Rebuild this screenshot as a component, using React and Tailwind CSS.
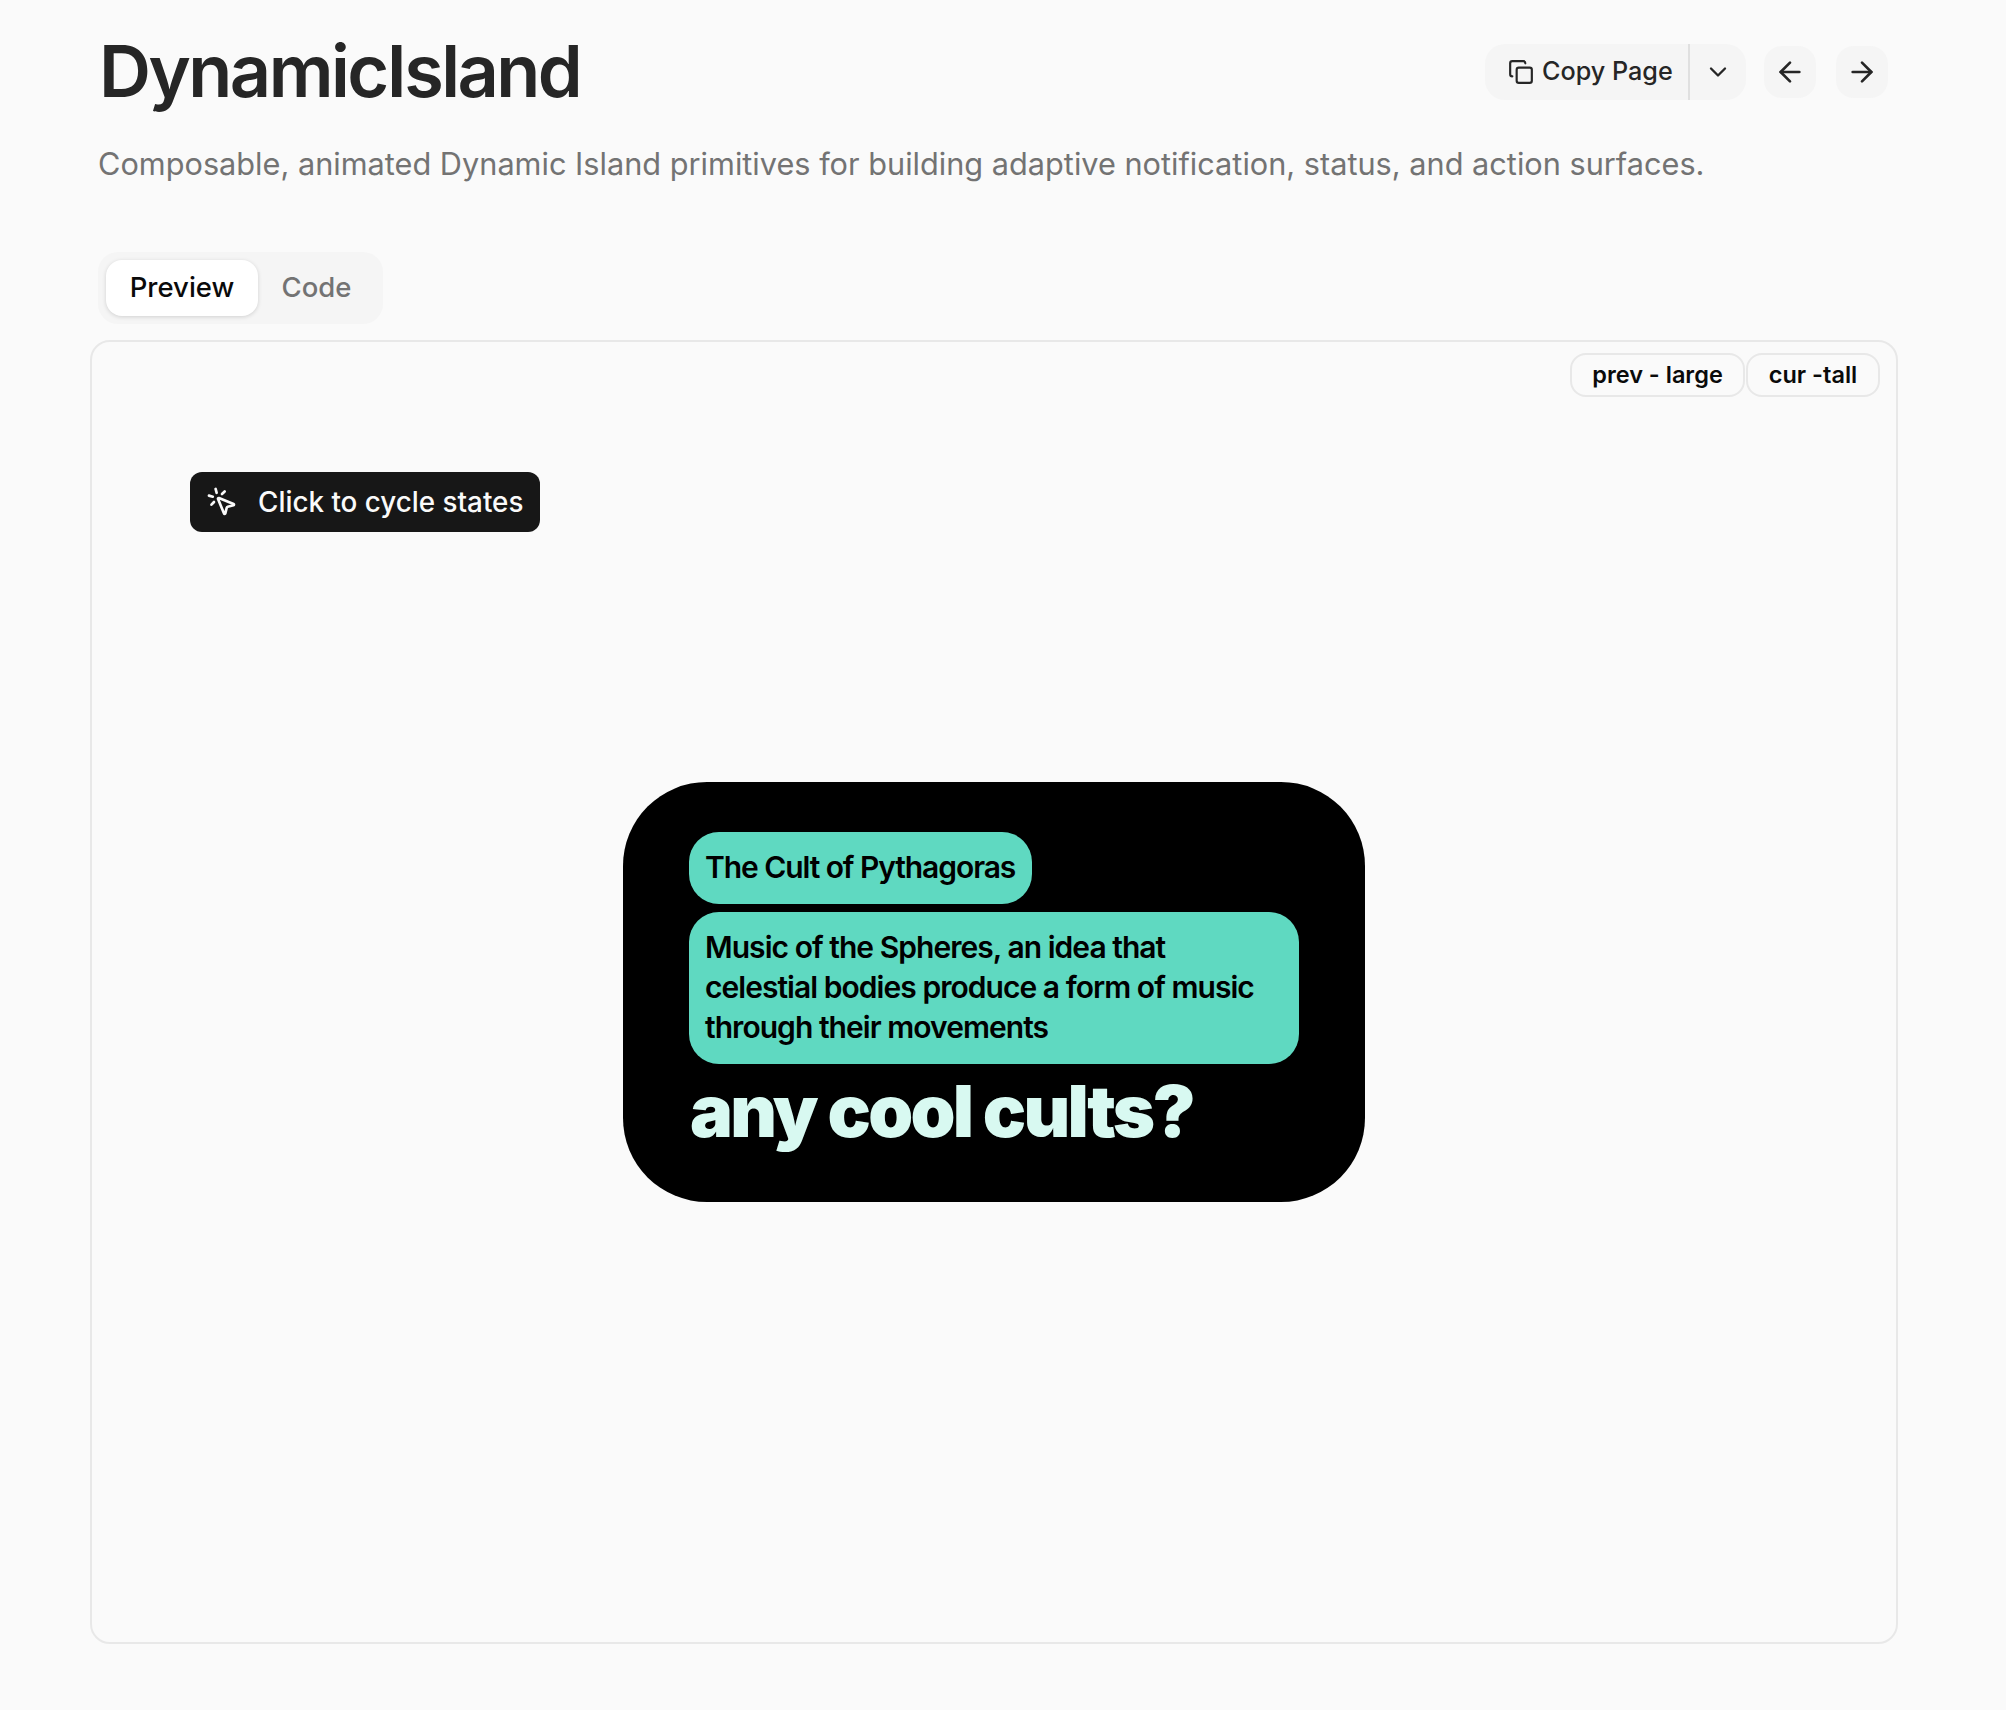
import React from "react";
import { Copy, ChevronDown, ArrowLeft, ArrowRight, MousePointerClick } from "lucide-react";

export default function App() {
  return (
    <div className="min-h-[1710px] w-[2006px] bg-[#fafafa] pt-[36px] pl-[90px] pr-[108px] font-['Inter',sans-serif] text-[#262626]">
      <div className="flex items-start justify-between pl-[9px] pr-[10px]">
        <h1 className="h-[72px] text-[72px] font-semibold leading-[70px] tracking-[-0.035em]">DynamicIsland</h1>
        <div className="flex items-center pt-[8px]">
          <div className="flex h-[56px] w-[261px] items-center rounded-[20px] bg-[#f5f5f5]">
            <button className="flex h-full w-[203px] items-center gap-[8px] pl-[23px] text-[25.2px] font-medium">
              <Copy size={26} strokeWidth={2} />
              <span>Copy Page</span>
            </button>
            <div className="h-full w-[2px] bg-[#e0e0e0]" />
            <button className="flex h-full flex-1 items-center justify-center">
              <ChevronDown size={28} strokeWidth={2} />
            </button>
          </div>
          <button className="ml-[18px] flex h-[52px] w-[52px] items-center justify-center rounded-[18px] bg-[#f5f5f5]">
            <ArrowLeft size={32} strokeWidth={2} />
          </button>
          <button className="ml-[20px] flex h-[52px] w-[52px] items-center justify-center rounded-[18px] bg-[#f5f5f5]">
            <ArrowRight size={32} strokeWidth={2} />
          </button>
        </div>
      </div>

      <p className="mt-[34px] pl-[8px] text-[30.7px] font-normal leading-[44px] text-[#737373]">
        Composable, animated Dynamic Island primitives for building adaptive notification, status, and action surfaces.
      </p>

      <div className="mt-[66px] ml-[8px] flex h-[72px] w-[285px] items-center rounded-[20px] bg-[#f5f5f5] pl-[8px]">
        <button className="flex h-[56px] w-[152px] items-center justify-center rounded-[16px] bg-white text-[27.5px] font-medium text-[#0a0a0a] shadow-[0_1px_4px_rgba(0,0,0,0.15)]">
          Preview
        </button>
        <button className="flex h-[56px] w-[117px] items-center justify-center text-[27.5px] font-medium text-[#737373]">
          Code
        </button>
      </div>

      <div className="relative mt-[16px] flex h-[1304px] w-[1808px] items-center justify-center rounded-[20px] border-2 border-[#e8e8e8]">
        <div className="absolute right-[16px] top-[11px] flex gap-[1px]">
          <span className="flex h-[44px] w-[175px] items-center justify-center rounded-[16px] border-2 border-[#e8e8e8] text-[23.5px] font-semibold text-[#0a0a0a]">prev - large</span>
          <span className="flex h-[44px] w-[134px] items-center justify-center rounded-[16px] border-2 border-[#e8e8e8] text-[23.5px] font-semibold text-[#0a0a0a]">cur -tall</span>
        </div>

        <button className="absolute left-[98px] top-[130px] flex h-[60px] w-[350px] items-center gap-[20px] rounded-[12px] bg-[#171717] pl-[16px] text-[27.8px] font-medium text-[#fafafa]">
          <MousePointerClick size={32} strokeWidth={2} />
          <span className="pt-[2px]">Click to cycle states</span>
        </button>

        <div className="flex h-[420px] w-[742px] flex-col items-start rounded-[84px] bg-black pl-[66px] pt-[50px] pr-[66px]">
          <div className="flex h-[72px] w-[343px] items-center rounded-[30px] bg-[#5fd9c1] pb-[2px] pl-[16px] text-[30px] font-semibold leading-[40px] tracking-[-0.036em] text-black">
            The Cult of Pythagoras
          </div>
          <div className="mt-[8px] h-[152px] w-[610px] rounded-[30px] bg-[#5fd9c1] px-[16px] pt-[15px] text-[30px] font-semibold leading-[40px] tracking-[-0.032em] text-black">
            Music of the Spheres, an idea that<br />celestial bodies produce a form of music<br />through their movements
          </div>
          <div className="mt-[5px] pl-[1px] text-[72px] font-black leading-[84px] tracking-[-0.038em] text-[#d8f9f1]">any cool cults?</div>
        </div>
      </div>
    </div>
  );
}
